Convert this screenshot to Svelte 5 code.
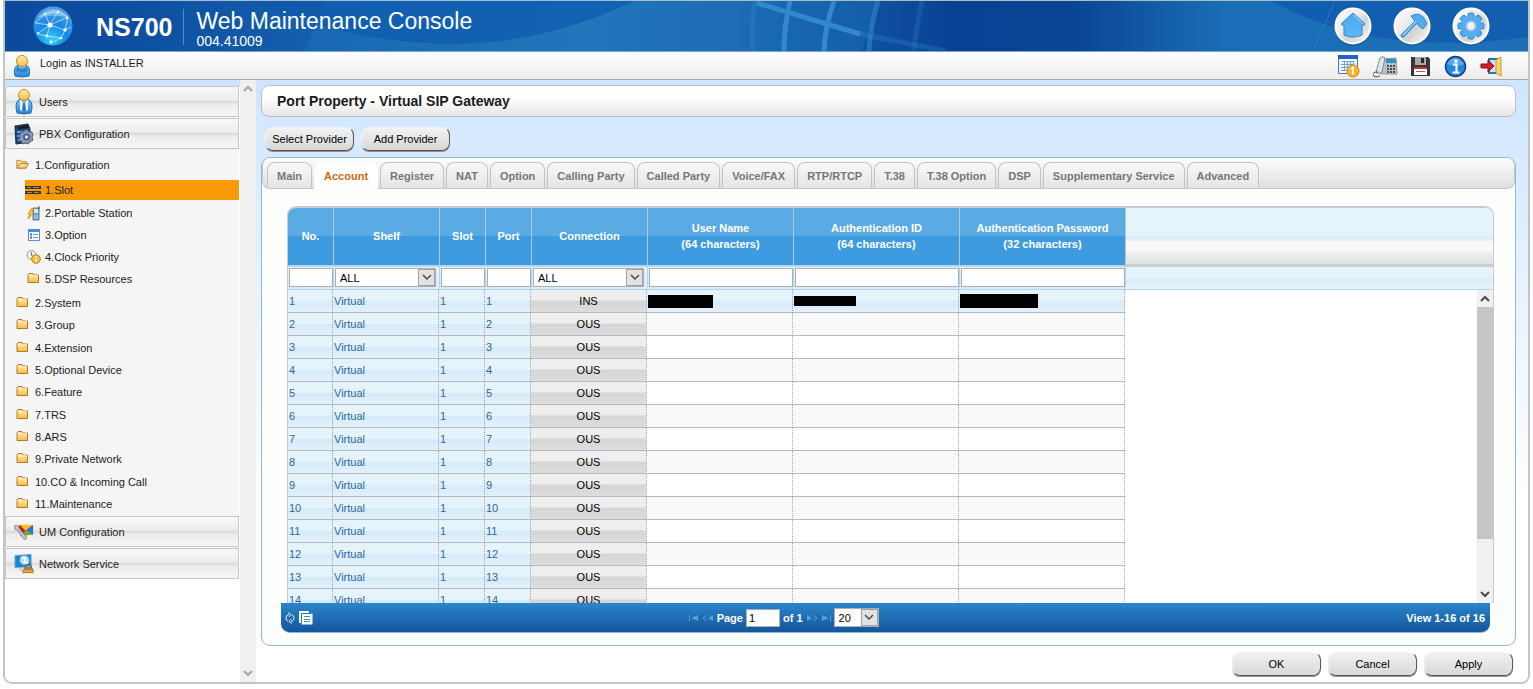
<script lang="ts">
  type Redaction = { width: number; height: number };

  const tabs = [
    'Main', 'Account', 'Register', 'NAT', 'Option', 'Calling Party', 'Called Party',
    'Voice/FAX', 'RTP/RTCP', 'T.38', 'T.38 Option', 'DSP', 'Supplementary Service', 'Advanced'
  ];

  const children = [
    { label: '2.Portable Station', icon: 'phone' },
    { label: '3.Option', icon: 'option' },
    { label: '4.Clock Priority', icon: 'clock' },
    { label: '5.DSP Resources', icon: 'folder' }
  ];

  const folders = [
    '2.System', '3.Group', '4.Extension', '5.Optional Device', '6.Feature', '7.TRS',
    '8.ARS', '9.Private Network', '10.CO & Incoming Call', '11.Maintenance'
  ];

  const columns = [
    { title: 'No.', width: 46 },
    { title: 'Shelf', width: 106, select: true },
    { title: 'Slot', width: 46 },
    { title: 'Port', width: 46 },
    { title: 'Connection', width: 116, select: true },
    { title: 'User Name', note: '(64 characters)', width: 146 },
    { title: 'Authentication ID', note: '(64 characters)', width: 166 },
    { title: 'Authentication Password', note: '(32 characters)', width: 166 }
  ];

  const hidden: Redaction[] = [
    { width: 65, height: 13 },
    { width: 62, height: 10 },
    { width: 78, height: 14 }
  ];

  const rows = Array.from({ length: 16 }, (_, i) => ({
    no: i + 1,
    shelf: 'Virtual',
    slot: 1,
    port: i + 1,
    state: i === 0 ? 'INS' : 'OUS'
  }));

  let activeTab = $state('Account');
  let selectedRow = $state(1);
  let page = $state('1');
</script>

{#snippet chevron(up: boolean)}
  <svg class="chevron" width="10" height="7" viewBox="0 0 10 7" aria-hidden="true">
    <path d={up ? 'M1 6 5 2 9 6' : 'M1 1 5 5 9 1'} fill="none" stroke="currentColor" stroke-width="2" />
  </svg>
{/snippet}

{#snippet folder()}
  <svg width="13" height="14" viewBox="0 0 13 14" aria-hidden="true">
    <path d="M1 3 2 1.500h4L7 3h4.500v7.500H1z" fill="url(#gold)" stroke="#b5781c" />
    <path d="M1.500 3.800h9.500" stroke="#fff3c4" />
  </svg>
{/snippet}

{#snippet selectBox(label: string)}
  <span class="select">
    <select aria-label={label}><option>ALL</option></select>
    <span class="arrow">{@render chevron(false)}</span>
  </span>
{/snippet}

<svg class="defs" width="0" height="0" aria-hidden="true">
  <defs>
    <linearGradient id="gold" x2="0" y2="1"><stop offset="0" stop-color="#ffeeb0" /><stop offset="1" stop-color="#f4bc50" /></linearGradient>
    <linearGradient id="sky" x2="0" y2="1"><stop offset="0" stop-color="#7fcbf8" /><stop offset="1" stop-color="#1e84d8" /></linearGradient>
    <linearGradient id="ice" x2="0" y2="1"><stop offset="0" stop-color="#4aa9f0" /><stop offset="1" stop-color="#5cb8f8" /></linearGradient>
    <linearGradient id="silver" x2="1" y2="1"><stop offset="0" stop-color="#ffffff" /><stop offset=".4" stop-color="#ececec" /><stop offset=".6" stop-color="#d2d2d2" /><stop offset="1" stop-color="#ffffff" /></linearGradient>
    <radialGradient id="globe" cx=".45" cy=".85" r=".9"><stop offset="0" stop-color="#35d0ff" /><stop offset=".45" stop-color="#1589e8" /><stop offset="1" stop-color="#5a9fe0" /></radialGradient>
  </defs>
</svg>

<div class="frame">
  <header class="banner">
    <svg class="banner-art" viewBox="0 0 1523 50" preserveAspectRatio="none" aria-hidden="true">
      <defs>
        <linearGradient id="sea">
          <stop offset="0" stop-color="#0b489a" />
          <stop offset=".07" stop-color="#0c4b9d" />
          <stop offset=".2" stop-color="#1868b3" />
          <stop offset=".38" stop-color="#2176bb" />
          <stop offset=".48" stop-color="#1e6cb4" />
          <stop offset=".56" stop-color="#1153a3" />
          <stop offset=".62" stop-color="#094294" />
          <stop offset=".7" stop-color="#094495" />
          <stop offset=".8" stop-color="#1a6db6" />
          <stop offset="1" stop-color="#1d70b8" />
        </linearGradient>
      </defs>
      <rect width="1523" height="50" fill="url(#sea)" />
      <path d="M245 0Q350 43 445 43T629 0z" fill="#0f5bad" opacity=".75" />
      <path d="M320 0 300 50H0V0z" fill="#0d50a3" opacity=".35" />
      <path d="M747 0q-3 25 0 50h110l14-50z" fill="#1a6cb3" opacity=".5" />
      <g fill="none" stroke="#3189cc" stroke-width="5">
        <path d="M785 0q-6 25-6 50" />
        <path d="M829 0q-9 25-10 50" />
        <path d="M873 0q-8 25-9 50" opacity=".6" />
        <path d="M917 0q-6 25-8 50" opacity=".25" />
        <path d="M750 0q-4 25-2 50" opacity=".35" />
        <path d="M752 2 855 33" />
        <path d="m855 33 85 17" opacity=".3" />
      </g>
      <path d="M1266 0q50 27 110 37 70 10 147-1V0z" fill="#0f5aad" opacity=".75" />
      <path d="M1330 0 1308 50" stroke="#3f8cca" opacity=".5" />
    </svg>
    <svg class="logo" width="42" height="42" viewBox="0 0 42 42" aria-hidden="true">
      <circle cx="21" cy="21" r="19.500" fill="url(#globe)" />
      <path d="M5 13Q21-5 37 13 22 8 5 13z" fill="#bfe2fb" opacity=".5" />
      <g fill="none" stroke="#d9f5ff" stroke-width=".8" opacity=".85">
        <path d="M3 18 18 20 36 12M18 20 26 6M18 20 13 9M18 20 33 25 29 33 19 38M18 20 15 31 5 29M36 12 33 25 39 22M26 6 36 12M15 31 29 33M13 9 26 6M5 29 18 20M13 9 3 18" />
      </g>
      <g fill="#fff">
        <circle cx="18" cy="20" r="2.600" /><circle cx="26" cy="7" r="1.200" /><circle cx="13" cy="9" r="1.100" />
        <circle cx="33" cy="25" r="1.700" /><circle cx="15" cy="31" r="1.400" /><circle cx="29" cy="33" r="1.300" />
        <circle cx="35" cy="13" r="1.200" /><circle cx="6" cy="28" r="1.100" /><circle cx="19" cy="37" r="1.400" />
      </g>
    </svg>
    <strong class="model">NS700</strong>
    <div class="product">
      <h1>Web Maintenance Console</h1>
      <div class="version">004.41009</div>
    </div>
    <nav class="shortcuts" aria-label="Shortcuts">
      <button aria-label="Home">
        <svg width="38" height="40" viewBox="0 0 38 40">
          <circle cx="19" cy="20.500" r="18" fill="#073a7c" opacity=".5" />
          <circle cx="19" cy="19" r="17.500" fill="url(#silver)" stroke="#fff" stroke-width="2" />
          <path d="M19 6 31 17l-3 2v9q-9 4-18 0v-9l-3-2z" fill="url(#ice)" stroke="#2f84cc" />
          <path d="M19 7.500 29 17" stroke="#a8dafa" />
        </svg>
      </button>
      <button aria-label="Maintenance tools">
        <svg width="38" height="40" viewBox="0 0 38 40">
          <circle cx="19" cy="20.500" r="18" fill="#073a7c" opacity=".5" />
          <circle cx="19" cy="19" r="17.500" fill="url(#silver)" stroke="#fff" stroke-width="2" />
          <path d="m8 28 14-14-4-5q7-4 12 1l4 7-4 5-4-3 0-2-3 0-12 13q-3 1-3-2z" fill="url(#ice)" stroke="#2f84cc" />
          <path d="m10 28 13-14" stroke="#b9e0fa" />
        </svg>
      </button>
      <button aria-label="Settings">
        <svg width="38" height="40" viewBox="0 0 38 40">
          <circle cx="19" cy="20.500" r="18" fill="#073a7c" opacity=".5" />
          <circle cx="19" cy="19" r="17.500" fill="url(#silver)" stroke="#fff" stroke-width="2" />
          <g fill="#51aef3" stroke="#2f84cc">
            {#each [0, 45, 90, 135, 180, 225, 270, 315] as angle}
              <rect x="16" y="6" width="6" height="6" rx="1.500" transform="rotate({angle} 19 19)" />
            {/each}
          </g>
          <circle cx="19" cy="19" r="10" fill="#51aef3" />
          <circle cx="19" cy="19" r="4.500" fill="#eef2f5" stroke="#b3c3d1" stroke-width="1.500" />
        </svg>
      </button>
    </nav>
  </header>

  <div class="userbar">
    <svg width="18" height="24" viewBox="0 0 18 24" aria-hidden="true">
      <path d="M2 22Q0 13 5 11h8q5 2 3 11-7 2-14 0z" fill="url(#sky)" stroke="#2a6aa8" />
      <path d="M4 12q5 6 10 0l1 5q-6 3-12 0z" fill="#2b86cb" />
      <circle cx="9" cy="7" r="5.500" fill="url(#gold)" stroke="#c98a22" />
    </svg>
    <span class="login">Login as INSTALLER</span>
    <nav class="tools" aria-label="Tools">
      <button aria-label="Schedule">
        <svg width="22" height="23" viewBox="0 0 22 23">
          <path d="M.5.5h19v18H.5z" fill="#eef6ff" stroke="#3b78d4" /><path d="M0 0h20v4H0z" fill="#245fd0" />
          <path d="M4 6.500h12M3 9.500h13M3 12.500h13M3 15.500h9M6.500 6v10M9.500 6v10M12.500 6v10M15.500 6v7" stroke="#6fa0dc" />
          <circle cx="15" cy="16" r="6" fill="#ffb423" stroke="#d88410" /><path d="m13 14 2-1.500v7" fill="none" stroke="#fff" stroke-width="2" />
        </svg>
      </button>
      <button aria-label="Telephone">
        <svg width="25" height="23" viewBox="0 0 25 23">
          <path d="m8 4 15-1 1 16H8z" fill="#b9c0c6" stroke="#8e959b" /><path d="M13 4h10v4H13z" fill="#2496c9" />
          <path d="M7 3q3-3 5 0L9 17q-3 3-6 0z" fill="#dfe4e8" stroke="#828a91" /><path d="M5 17q-6 0-5 3t7 1" fill="none" stroke="#444" />
          <path d="M14 11h8M14 14h8M14 17h8" stroke="#444c55" stroke-width="2" stroke-dasharray="2 1" />
        </svg>
      </button>
      <button aria-label="Save">
        <svg width="20" height="21" viewBox="0 0 20 21">
          <path d="M0 1h17l2 2v17H0z" fill="#36363c" /><path d="M4 1h11v8H4z" fill="#a8a8a8" /><path d="M10 2h3v5h-3z" fill="#26262b" />
          <path d="M3 12h13v7H3z" fill="#fff" /><path d="M3 11h13v2H3z" fill="#cf2d2d" /><path d="M5 15.500h9" stroke="#777" />
        </svg>
      </button>
      <button aria-label="Information">
        <svg width="23" height="23" viewBox="0 0 23 23">
          <circle cx="11.500" cy="11.500" r="10" fill="#2387de" stroke="#143f86" stroke-width="1.500" />
          <path d="M3 9q8-12 17 0-8 4-17 0z" fill="#8fcaf5" opacity=".5" />
          <circle cx="12" cy="6" r="1.800" fill="#fff" /><path d="M9 9.500h3.500V17M8.500 17.500h7" fill="none" stroke="#fff" stroke-width="2" />
        </svg>
      </button>
      <button aria-label="Log out">
        <svg width="23" height="21" viewBox="0 0 23 21">
          <path d="M9 3h8v14H9z" fill="#c7e3f8" stroke="#2873b4" stroke-width="2" /><path d="m16 4 5-3v19l-5-3z" fill="#ffd56b" stroke="#d09428" />
          <path d="M1 8h7V4l6 6-6 6v-4H1z" fill="#d3202b" stroke="#8c0c15" />
        </svg>
      </button>
    </nav>
  </div>

  <div class="body">
    <aside class="sidebar">
      <nav class="menu" aria-label="Main menu">
        <button class="section">
          <svg width="20" height="26" viewBox="0 0 20 26" aria-hidden="true">
            <path d="M3 24Q0 13 6 10h8q6 3 3 14-7 2-14 0z" fill="url(#sky)" stroke="#2a6aa8" />
            <path d="m6 10 4 5 4-5v11l-4 2-4-2z" fill="#e4f4ff" /><path d="M9 14h2l1 7-2 3-2-3z" fill="#2876b8" />
            <circle cx="10" cy="6" r="5.500" fill="url(#gold)" stroke="#c98a22" />
          </svg>
          Users
        </button>
        <button class="section">
          <svg width="20" height="22" viewBox="0 0 20 22" aria-hidden="true">
            <path d="m1 3 13-2 2 5v13l-14 2z" fill="#1d4a7c" stroke="#142a45" /><path d="m3 4 11-2 1 3-11 1z" fill="#151a22" /><path d="M3 9h6M3 13h4M4 17h5" stroke="#5aa3dd" stroke-width="2" />
            <path d="m11 7 3 0 1 2 3 0 1 3-1 2 1 3-3 2-2 2-3-1-2 1-2-3-2-2 1-3 0-3 3-1z" fill="#8b95ae" stroke="#555f78" /><circle cx="12.500" cy="14" r="2.500" fill="#dce6f5" stroke="#35589b" stroke-width="1.500" />
          </svg>
          PBX Configuration
        </button>
        <div class="tree">
          <a class="node root" href="#configuration">
            <svg width="14" height="14" viewBox="0 0 14 14" aria-hidden="true">
              <path d="M1 10V2h4l1 1.500h5V6" fill="#ffe69c" stroke="#b5781c" /><path d="m1 10.500 3-5h9.500l-3 5z" fill="url(#gold)" stroke="#b5781c" />
            </svg>
            1.Configuration
          </a>
          <a class="node current" href="#slot" aria-current="page">
            <svg width="16" height="11" viewBox="0 0 16 11" aria-hidden="true">
              <path d="M0 1h16v3H0zM0 6h16v3H0z" fill="#35342f" /><path d="M2 2.500h4M8 2.500h6M2 7.500h5M9 7.500h5" stroke="#8f8c80" />
            </svg>
            1.Slot
          </a>
          <div class="children">
            {#each children as child}
              <a class="node" href={'#' + child.icon}>
                <span class="node-icon">
                  {#if child.icon === 'phone'}
                    <svg width="13" height="15" viewBox="0 0 13 15" aria-hidden="true">
                      <path d="M6 2h6v12H6z" fill="#6f9fcc" stroke="#54789c" /><path d="M7 3h4v4H7z" fill="#c8ecff" /><path d="M7 10h4M7 12h4" stroke="#eaf3fb" stroke-dasharray="1 .5" /><path d="M12 0v3" stroke="#446" />
                      <path d="M4 3 7 2 5 6h2l-6 7 2-5H1z" fill="#ffc933" stroke="#cf8615" stroke-width=".8" />
                    </svg>
                  {:else if child.icon === 'option'}
                    <svg width="12" height="12" viewBox="0 0 12 12" aria-hidden="true">
                      <path d="M.5.5h11v11H.5z" fill="#f4faff" stroke="#5c8cc4" /><path d="M0 0h12v3H0z" fill="#4c8bd6" /><path d="M2 5.500h2M2 8.500h2" stroke="#356cb4" stroke-width="2" /><path d="M5 5.500h5M5 8.500h5" stroke="#6c93bd" />
                    </svg>
                  {:else if child.icon === 'clock'}
                    <svg width="15" height="14" viewBox="0 0 15 14" aria-hidden="true">
                      <circle cx="5.500" cy="5" r="4.500" fill="#eee" stroke="#9a9a9a" /><path d="M5.500 2v3.500L8 7" fill="none" stroke="#777" />
                      <circle cx="10" cy="9" r="4.300" fill="#ffbd3c" stroke="#c97c11" /><path d="M10 6v2M10 9v3" stroke="#fff" stroke-width="1.500" />
                    </svg>
                  {:else}
                    {@render folder()}
                  {/if}
                </span>
                {child.label}
              </a>
            {/each}
          </div>
          <div class="folders">
            {#each folders as label}
              <a class="node root" href={'#' + label}>{@render folder()}{label}</a>
            {/each}
          </div>
        </div>
        <button class="section">
          <svg width="22" height="20" viewBox="0 0 22 20" aria-hidden="true">
            <path d="M6 2h15v11l-14 1z" fill="#f3c11c" /><path d="m13 8 8-6v11z" fill="#2d71ce" /><path d="m6 2 7 7-6 5z" fill="#cf1820" /><path d="m7 14 6-6 8 5z" fill="#6cab2f" />
            <path d="M1 3q4-1 5 3l8 10q-1 4-4 1L4 8Q0 8 1 3z" fill="#c3c8cd" stroke="#777e85" /><path d="M6 3 9 9" stroke="#d51c22" stroke-width="2" />
          </svg>
          UM Configuration
        </button>
        <button class="section">
          <svg width="21" height="21" viewBox="0 0 21 21" aria-hidden="true">
            <path d="m1 2 17-1v13L1 15z" fill="#2182cd" stroke="#75aeda" /><circle cx="11" cy="7" r="5" fill="#a8dcf8" /><path d="m8 4 4 1-1 4 4 1" fill="none" stroke="#fff" stroke-width="2" />
            <path d="M5 15h6v3H5z" fill="#ccd3d9" /><path d="m12 12 5-1 3 7h-9z" fill="#858b92" stroke="#555" /><path d="M10 17h10v3H9z" fill="#f5a924" stroke="#b67414" />
          </svg>
          Network Service
        </button>
      </nav>
      <div class="scrollbar pale">
        {@render chevron(true)}
        {@render chevron(false)}
      </div>
    </aside>

    <main>
      <h2>Port Property - Virtual SIP Gateway</h2>
      <div class="actions">
        <button class="btn">Select Provider</button>
        <button class="btn">Add Provider</button>
      </div>

      <section class="card">
        <div class="tabs" role="tablist">
          {#each tabs as tab}
            <button
              class="tab"
              class:active={tab === activeTab}
              role="tab"
              aria-selected={tab === activeTab}
              onclick={() => (activeTab = tab)}>{tab}</button>
          {/each}
        </div>

        <div class="grid">
          <div class="grid-head">
            <table>
              <colgroup>
                {#each columns as col}<col style="width: {col.width}px" />{/each}
              </colgroup>
              <thead>
                <tr class="titles">
                  {#each columns as col}
                    <th scope="col">{col.title}{#if col.note}<br />{col.note}{/if}</th>
                  {/each}
                </tr>
                <tr class="filters">
                  {#each columns as col}
                    <td>
                      {#if col.select}
                        {@render selectBox(col.title)}
                      {:else}
                        <input type="text" aria-label={col.title} />
                      {/if}
                    </td>
                  {/each}
                </tr>
              </thead>
            </table>
            <div class="head-rest">
              <div class="rest-blue"></div>
              <div class="rest-grey"></div>
              <div class="rest-filter"></div>
            </div>
          </div>
          <div class="grid-body">
            <div class="viewport">
              <table>
                <colgroup>
                  {#each columns as col, i}
                    <col style="width: {i === 0 ? col.width - 1 : col.width}px" />
                  {/each}
                </colgroup>
                <tbody>
                  {#each rows as row}
                    <tr class:selected={row.no === selectedRow} onclick={() => (selectedRow = row.no)}>
                      <td class="fixed">{row.no}</td>
                      <td class="fixed">{row.shelf}</td>
                      <td class="fixed">{row.slot}</td>
                      <td class="fixed">{row.port}</td>
                      <td class="state"><button>{row.state}</button></td>
                      {#each hidden as box}
                        <td>
                          {#if row.no === 1}
                            <span class="mask" style="width: {box.width}px; height: {box.height}px"></span>
                          {/if}
                        </td>
                      {/each}
                    </tr>
                  {/each}
                </tbody>
              </table>
            </div>
            <div class="scrollbar">
              {@render chevron(true)}
              <div class="track"><div class="thumb"></div></div>
              {@render chevron(false)}
            </div>
          </div>
        </div>

        <div class="pager">
          <div class="pager-left">
            <button aria-label="Refresh">
              <svg width="10" height="12" viewBox="0 0 10 12"><path d="M4 2.500Q1 3 1 6t2 3M6 9.500q3-.5 3-3.500T7 3M3 .5l3 2-2 2.500M7 11.500 4 9.500l2-2.500" fill="none" stroke="#d6ecfb" /></svg>
            </button>
            <button aria-label="Copy">
              <svg width="14" height="14" viewBox="0 0 14 14"><path d="M0 0h10v12H0z" fill="#fff" /><path d="M2.500 2.500h11v11h-11z" fill="#fff" /><path d="M2.500 12V2.500H12" fill="none" stroke="#2270b4" /><path d="M5 5.500h6M5 8.500h6M5 10.500h6" stroke="#4690cc" /></svg>
            </button>
          </div>
          <div class="pager-mid">
            <button aria-label="First page"><svg width="10" height="6" viewBox="0 0 10 6"><path d="M0 0h1v6H0zM9 0v6L2 3z" /></svg></button>
            <button aria-label="Previous page"><svg width="12" height="6" viewBox="0 0 12 6"><path d="M11 0v6L6 3z" /><path d="M5 0 1 3l4 3" fill="none" stroke="#5b9fd2" /></svg></button>
            <label for="page">Page</label>
            <input id="page" type="text" bind:value={page} />
            <span>of 1</span>
            <button aria-label="Next page"><svg width="12" height="6" viewBox="0 0 12 6"><path d="M1 0v6l5-3z" /><path d="m7 0 4 3-4 3" fill="none" stroke="#5b9fd2" /></svg></button>
            <button aria-label="Last page"><svg width="10" height="6" viewBox="0 0 10 6"><path d="M9 0h1v6H9zM1 0v6l7-3z" /></svg></button>
            <span class="select">
              <select aria-label="Rows per page"><option>20</option></select>
              <span class="arrow">{@render chevron(false)}</span>
            </span>
          </div>
          <div class="pager-right">View 1-16 of 16</div>
        </div>
      </section>

      <footer>
        <button class="btn">OK</button>
        <button class="btn">Cancel</button>
        <button class="btn">Apply</button>
      </footer>
    </main>
  </div>
</div>

<style>
  :global(body) {
    background: #fff;
    font-family: 'Liberation Sans', Arial, sans-serif;
    font-size: 11px;
    color: #1c1c1c;
  }

  .defs {
    position: absolute;
  }

  .frame,
  .frame * {
    box-sizing: border-box;
  }

  .frame {
    display: flex;
    flex-direction: column;
    height: calc(100vh - 5px);
    margin: 0 3px;
    border: 2px solid #c4c4c4;
    border-top: 1px solid #a9bccb;
    border-radius: 0 0 9px 9px;
    overflow: hidden;
  }

  button,
  input,
  select {
    font: inherit;
    color: inherit;
    margin: 0;
    padding: 0;
  }

  button {
    border: 0;
    background: none;
    cursor: pointer;
  }

  svg {
    display: block;
    flex: none;
  }

  /* banner */
  .banner {
    position: relative;
    display: flex;
    flex: none;
    height: 51px;
    padding: 0 38px 0 27px;
    border-bottom: 1px solid #7ba4c6;
    color: #fff;
  }

  .banner-art {
    position: absolute;
    inset: 0;
    width: 100%;
    height: 100%;
  }

  .logo,
  .model,
  .product,
  .shortcuts {
    position: relative;
  }

  .logo {
    margin-top: 4px;
  }

  .model {
    margin-left: 22px;
    font-size: 25px;
    line-height: 52px;
  }

  .product {
    margin: 8px 0 6px 11px;
    padding-left: 12px;
    border-left: 1px solid #4d8dc9;
  }

  h1 {
    margin: -1px 0 0;
    font-size: 23px;
    font-weight: 400;
    line-height: 26px;
  }

  .version {
    font-size: 14px;
    line-height: 14px;
  }

  .shortcuts {
    display: flex;
    gap: 21px;
    margin: 6px 0 0 auto;
    height: 40px;
  }

  .userbar {
    display: flex;
    flex: none;
    height: 28px;
    padding: 2px 25px 0 8px;
    background: linear-gradient(#fff, #ececec);
    border-bottom: 1px solid #a9aa9c;
  }

  .login {
    margin-left: 9px;
    line-height: 19px;
  }

  .tools {
    display: flex;
    align-items: center;
    gap: 13px;
    margin-left: auto;
    height: 24px;
  }

  .body {
    display: flex;
    flex: 1;
    min-height: 0;
    background: linear-gradient(#cfe5ff, #e0efff 150px, #fff 420px);
  }

  /* sidebar */
  .sidebar {
    display: flex;
    flex: none;
    width: 251px;
  }

  .menu {
    display: flex;
    flex-direction: column;
    width: 235px;
    padding-top: 6px;
    background: linear-gradient(#cfe5ff 6px, #fff 6px);
  }

  .section {
    display: flex;
    align-items: center;
    gap: 5px;
    flex: none;
    width: 234px;
    height: 31px;
    margin-bottom: 1px;
    padding-left: 8px;
    border: 1px solid #c6c6c6;
    background: linear-gradient(#f8f8f8, #ededed 45%, #dadada 50%, #ececec 60%, #f7f7f7);
  }

  .section svg {
    width: 20px;
  }

  .tree {
    width: 234px;
    margin-top: -1px;
    padding: 5px 0 1px;
    background: #f5f5f5;
  }

  .node {
    display: flex;
    align-items: center;
    gap: 6px;
    height: 22px;
    color: inherit;
    text-decoration: none;
  }

  .root {
    padding-left: 11px;
  }

  .root svg {
    width: 13px;
  }

  .current {
    height: 20px;
    margin: 4px 0 2px 20px;
    gap: 4px;
    background: #f99b07;
  }

  .node-icon {
    display: flex;
    justify-content: center;
    width: 15px;
  }

  .children {
    padding-left: 21px;
  }

  .children .node {
    gap: 4px;
  }

  .folders {
    display: flex;
    flex-direction: column;
    justify-content: space-between;
    height: 223px;
    margin-top: 2px;
  }

  .scrollbar {
    display: flex;
    flex-direction: column;
    justify-content: space-between;
    align-items: center;
    width: 16px;
    padding: 5px 0;
    background: #f0f0f0;
    color: #4a4a4a;
  }

  .pale {
    color: #a6a6a6;
  }

  .track {
    flex: 1;
    width: 100%;
    padding: 5px 0 4px;
  }

  .thumb {
    height: 83%;
    background: #c6c6c6;
  }

  /* main panel */
  main {
    display: flex;
    flex: 1;
    flex-direction: column;
    min-width: 0;
    padding: 5px 12px 6px 5px;
  }

  h2 {
    flex: none;
    height: 32px;
    margin: 0;
    padding-left: 15px;
    border: 1px solid #b6bfc8;
    border-radius: 8px;
    background: linear-gradient(#fff 40%, #e6e6e6);
    font-size: 14px;
    line-height: 30px;
  }

  .actions {
    display: flex;
    gap: 7px;
    padding: 10px 4px 6px;
  }

  .btn {
    width: 89px;
    height: 24px;
    border: 1px solid #f2f2f2;
    border-right-color: #555;
    border-bottom-color: #555;
    border-radius: 8px;
    background: linear-gradient(#f2f2f2, #d8d8d8);
    box-shadow: 0 1px 0 #8f8f8f;
    color: #000;
  }

  .card {
    display: flex;
    flex: 1;
    flex-direction: column;
    min-height: 0;
    padding-bottom: 12px;
    border: 1px solid #8dbad3;
    border-radius: 9px;
    background: #fdfdfc;
  }

  .tabs {
    display: flex;
    flex: none;
    gap: 2px;
    height: 31px;
    padding: 4px 4px 0;
    border: 1px solid #c6c6c6;
    border-top: 0;
    border-radius: 8px;
    background: linear-gradient(#fdfdfd, #dfdfdf);
  }

  .tab {
    height: 26px;
    padding: 0 9px;
    border: 1px solid #c4c4c4;
    border-bottom: 0;
    border-radius: 8px 8px 0 0;
    background: linear-gradient(#f9f9f9, #e5e5e5);
    color: #777;
    font-weight: 700;
    white-space: nowrap;
  }

  .active {
    height: 27px;
    border-color: #fff;
    background: #fff;
    color: #cf6a0e;
  }

  .grid {
    display: flex;
    flex: 1;
    flex-direction: column;
    min-height: 0;
    margin: 17px 21px 0 25px;
    border: 1px solid #c4ccd2;
    border-top: 2px solid #c4cdd3;
    border-bottom: 0;
    border-radius: 9px 9px 0 0;
    overflow: hidden;
    background: #fff;
  }

  .grid-head,
  .grid-body {
    display: flex;
  }

  .grid-head {
    flex: none;
  }

  .grid-body {
    flex: 1;
    min-height: 0;
  }

  .viewport {
    flex: 1;
    min-width: 0;
    overflow: hidden;
  }

  table {
    flex: none;
    width: 838px;
    table-layout: fixed;
    border-collapse: separate;
    border-spacing: 0;
  }

  .viewport table {
    width: 837px;
  }

  th,
  td {
    padding: 0;
  }

  .titles th {
    height: 57px;
    padding-bottom: 2px;
    border-right: 1px solid #b9c6cf;
    background: linear-gradient(#5aaae3 50%, #3f9be0 50%);
    color: #fff;
    font-weight: 700;
    line-height: 16px;
  }

  .filters td {
    height: 25px;
    padding: 3px 0 2px 1px;
    border-right: 1px solid #b4d6ec;
    border-bottom: 1px solid #b4d6ec;
    background: linear-gradient(#b4d6ec 2px, #e5f3fb 2px, #d8ecf9);
  }

  input {
    display: block;
    width: 100%;
    height: 19px;
    padding: 0 2px;
    border: 1px solid #a8b0b6;
    border-radius: 0;
    background: #fff;
    color: #000;
  }

  .select {
    position: relative;
    display: block;
    margin-right: 3px;
  }

  .select select {
    display: block;
    width: 100%;
    height: 19px;
    padding: 0 20px 0 4px;
    appearance: none;
    border: 1px solid #a8b0b6;
    border-radius: 0;
    background: #fff;
    color: #000;
  }

  .arrow {
    position: absolute;
    top: 1px;
    right: 1px;
    bottom: 1px;
    display: flex;
    align-items: center;
    justify-content: center;
    width: 17px;
    border: 1px solid #a2a2a2;
    background: #e2e2e2;
    color: #4a4a4a;
    pointer-events: none;
  }

  .arrow :global(path) {
    stroke-width: 1.5;
  }

  .head-rest {
    display: flex;
    flex: 1;
    flex-direction: column;
  }

  .rest-blue {
    height: 33px;
    background: linear-gradient(#e5f3fb 28px, #d8ecf9 28px, #e5f3fb);
  }

  .rest-grey {
    height: 26px;
    border-bottom: 3px solid #c4ced4;
    background: linear-gradient(#f9f9f9 10px, #f0f0f0 10px, #e2e2e2);
  }

  .rest-filter {
    flex: 1;
    border-bottom: 1px solid #b4d6e6;
    background: linear-gradient(#e5f3fb 50%, #d8ecf9 50%, #e5f3fb);
  }

  tbody td {
    height: 23px;
    border-right: 1px dotted #a3a3a3;
    border-bottom: 1px solid #b4bac0;
    background: #fff;
  }

  tbody tr:nth-child(even) td {
    background: #f9f9f9;
  }

  tbody .fixed,
  tbody tr:nth-child(even) .fixed,
  .selected td {
    padding-left: 1px;
    background: linear-gradient(#e5f3fb 50%, #d6ebf9 52%, #e2f1fb);
    color: #2b6a9c;
  }

  .state button {
    display: block;
    width: 100%;
    height: 22px;
    background: linear-gradient(#eee 45%, #d6d6d6 50%, #dcdcdc);
    color: #000;
  }

  tbody .state {
    padding: 0;
  }

  .mask {
    display: block;
    background: #000;
  }

  /* pager */
  .pager {
    display: grid;
    grid-template-columns: 2fr auto 3fr;
    align-items: center;
    flex: none;
    height: 30px;
    margin: 0 25px 0 19px;
    border-bottom: 1px solid #86b8dc;
    border-radius: 0 0 9px 9px;
    background: linear-gradient(#2b85ca, #15559c);
    color: #fff;
    font-weight: 700;
  }

  .pager-left {
    display: flex;
    align-items: center;
    gap: 4px;
    padding-left: 4px;
  }

  .pager-mid {
    display: flex;
    align-items: center;
    gap: 3px;
  }

  .pager-mid button svg {
    fill: #5b9fd2;
  }

  .pager-mid input {
    width: 34px;
    height: 18px;
    font-weight: 400;
  }

  .pager-mid .select {
    width: 45px;
    margin: 0;
    font-weight: 400;
  }

  .pager-right {
    padding-right: 5px;
    text-align: right;
  }

  footer {
    display: flex;
    flex: none;
    justify-content: flex-end;
    gap: 7px;
    padding: 6px 3px 0 0;
  }
</style>
